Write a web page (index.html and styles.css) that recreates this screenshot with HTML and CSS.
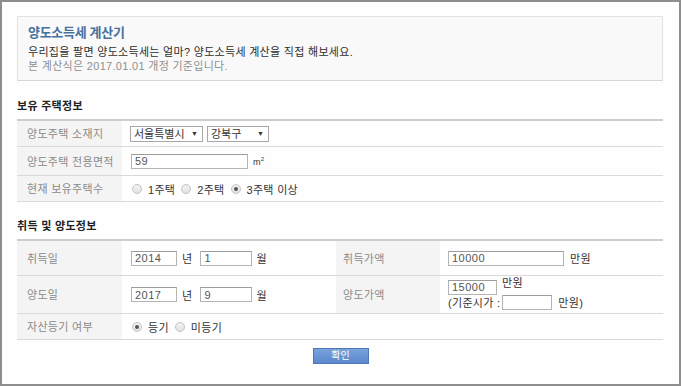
FILE: index.html
```html
<!DOCTYPE html>
<html lang="ko">
<head>
<meta charset="utf-8">
<title>양도소득세 계산기</title>
<link rel="stylesheet" href="styles.css">
</head>
<body>
<div class="frame">
  <div class="intro">
    <h1 class="title">양도소득세 계산기</h1>
    <p class="lead">우리집을 팔면 양도소득세는 얼마? 양도소득세 계산을 직접 해보세요.</p>
    <p class="note">본 계산식은 2017.01.01 개정 기준입니다.</p>
  </div>

  <h2 class="section">보유 주택정보</h2>
  <div class="grid grid-2 rows-house">
    <div class="lbl">양도주택 소재지</div>
    <div class="val">
      <span class="select sel-city">서울특별시<span class="arrow">▼</span></span>
      <span class="select sel-gu">강북구<span class="arrow">▼</span></span>
    </div>
    <div class="lbl">양도주택 전용면적</div>
    <div class="val">
      <input class="field w-area" type="text" value="59">
      <span class="unit-m">m<sup>2</sup></span>
    </div>
    <div class="lbl">현재 보유주택수</div>
    <div class="val radios">
      <span class="radio"></span><span class="opt">1주택</span>
      <span class="radio"></span><span class="opt">2주택</span>
      <span class="radio on"></span><span class="opt">3주택 이상</span>
    </div>
  </div>

  <h2 class="section">취득 및 양도정보</h2>
  <div class="grid grid-4 rows-deal">
    <div class="lbl">취득일</div>
    <div class="val">
      <input class="field w-year" type="text" value="2014"><span class="txt t-year">년</span>
      <input class="field w-month" type="text" value="1"><span class="txt t-month">월</span>
    </div>
    <div class="lbl">취득가액</div>
    <div class="val">
      <input class="field w-price" type="text" value="10000"><span class="txt t-won">만원</span>
    </div>

    <div class="lbl">양도일</div>
    <div class="val">
      <input class="field w-year" type="text" value="2017"><span class="txt t-year">년</span>
      <input class="field w-month" type="text" value="9"><span class="txt t-month">월</span>
    </div>
    <div class="lbl">양도가액</div>
    <div class="val stack">
      <div class="line">
        <input class="field w-small" type="text" value="15000"><span class="txt t-won2">만원</span>
      </div>
      <div class="line">
        <span class="txt">(기준시가 :</span>
        <input class="field w-base" type="text" value=""><span class="txt t-won3">만원)</span>
      </div>
    </div>

    <div class="lbl">자산등기 여부</div>
    <div class="val radios span3">
      <span class="radio on"></span><span class="opt">등기</span>
      <span class="radio"></span><span class="opt">미등기</span>
    </div>
  </div>

  <div class="actions">
    <button class="btn" type="button">확인</button>
  </div>
</div>
</body>
</html>
```

FILE: styles.css
```css
* { box-sizing: border-box; }

html, body {
  margin: 0;
  padding: 0;
  background: #ffffff;
}

body {
  font-family: "Liberation Sans", "Noto Sans CJK KR", sans-serif;
  font-size: 11px;
  color: #333;
  letter-spacing: 0.3px;
}

.frame {
  width: 681px;
  height: 386px;
  border: 2px solid #8e8e8e;
  padding: 14px 16px 0 15px;
  background: #fefefe;
}

.intro {
  border: 1px solid #e1e1e1;
  border-bottom-color: #d6d6d6;
  background: #f9f9f9;
  padding: 7px 10px 7px 10px;
  height: 65px;
  margin-bottom: 17px;
}

.title {
  margin: 0 0 3px;
  font-size: 13px;
  line-height: 18px;
  font-weight: bold;
  letter-spacing: -0.3px;
  color: #46719f;
}

.lead, .note {
  margin: 0;
  line-height: 14px;
  font-size: 11px;
}

.lead { color: #2e2e2e; }
.note { color: #8f8f8f; }

.section {
  margin: 16px 0 5px;
  font-size: 11px;
  line-height: 16px;
  font-weight: bold;
  color: #222;
}

.grid {
  display: grid;
  border-top: 2px solid #cdcdcd;
}

.grid-2 { grid-template-columns: 105px 1fr; }
.grid-4 { grid-template-columns: 105px 214px 104px 1fr; }

.rows-house { grid-template-rows: 26px 29px 26px; }
.rows-deal { grid-template-rows: 35px 38px 26px; }

.lbl, .val {
  border-bottom: 1px solid #d9d9d9;
  display: flex;
  align-items: center;
}

.lbl {
  background: #f4f4f4;
  color: #8a8a8a;
  padding-left: 10px;
  padding-bottom: 1px;
}

.grid-4 .lbl:nth-child(4n+3) { padding-left: 7px; }

.val {
  padding-left: 8px;
  color: #333;
}

.span3 { grid-column: 2 / 5; }

.select {
  display: inline-flex;
  align-items: center;
  justify-content: space-between;
  height: 16px;
  border: 1px solid #a8a8a8;
  background: #fff;
  padding: 0 4px 0 3px;
  color: #333;
  font-size: 11px;
  line-height: 14px;
  letter-spacing: 0;
}

.sel-city { width: 73px; margin-right: 4px; }
.sel-gu { width: 62px; }

.arrow {
  font-size: 7px;
  color: #333;
}

.field {
  height: 15px;
  border: 1px solid #b4b4b4;
  border-top-color: #9c9c9c;
  background: #fff;
  padding: 0 3px;
  margin: 0;
  font-family: "Liberation Sans", "Noto Sans CJK KR", sans-serif;
  font-size: 11px;
  letter-spacing: 0.5px;
  color: #555;
  outline: none;
}

.w-area { width: 117px; margin-left: 1px; }
.w-year { width: 46px; margin-left: 1px; }
.w-month { width: 52px; }
.w-price { width: 116px; }
.w-small { width: 49px; }
.w-base { width: 50px; margin-left: 2px; }

.txt { color: #333; }
.t-year { margin: 0 8px 0 5px; }
.t-month { margin-left: 4px; }
.t-won { margin-left: 6px; }
.t-won2 { margin-left: 5px; align-self: flex-start; margin-top: -6px; }
.t-won3 { margin-left: 6px; }

.unit-m {
  margin-left: 5px;
  font-size: 9px;
  color: #333;
}

.unit-m sup { font-size: 6px; }

.stack {
  flex-direction: column;
  align-items: flex-start;
  justify-content: center;
}

.line {
  display: flex;
  align-items: center;
  height: 15px;
}

.radios { padding-left: 10px; }

.radio {
  width: 10px;
  height: 10px;
  border-radius: 50%;
  border: 1px solid #c4c4c4;
  background: linear-gradient(#f2f2f2, #e2e2e2);
  margin-right: 6px;
  position: relative;
}

.radio.on::after {
  content: "";
  position: absolute;
  left: 2px;
  top: 2px;
  width: 4px;
  height: 4px;
  border-radius: 50%;
  background: #555;
}

.opt {
  margin-right: 6px;
  color: #333;
}

.actions {
  display: flex;
  justify-content: center;
  padding-top: 8px;
}

.btn {
  width: 56px;
  height: 16px;
  border: 1px solid #4c78b8;
  background: linear-gradient(#79a3dc, #5a88cc);
  color: #fff;
  font-family: "Liberation Sans", "Noto Sans CJK KR", sans-serif;
  font-size: 10px;
  line-height: 12px;
  letter-spacing: 0;
  padding: 0;
  margin-left: 1px;
}
```
